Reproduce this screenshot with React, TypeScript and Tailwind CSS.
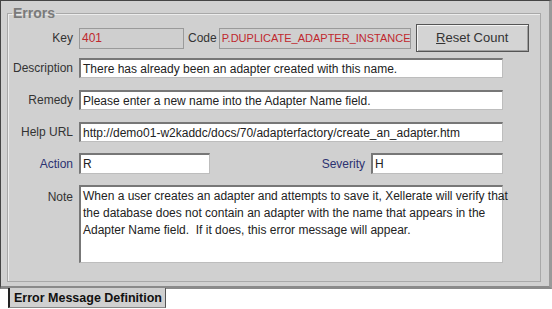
import { ReactElement, ReactNode } from "react";

const FONT = "font-['Liberation_Sans',Arial,sans-serif]";

const Label = ({ children, blue = false, w = "w-[71px]" }: { children: ReactNode; blue?: boolean; w?: string }): ReactElement => (
  <div className={`${w} shrink-0 text-right pr-[6px] text-[12px] ${blue ? "text-[#2c3270]" : "text-[#333]"}`}>
    {children}
  </div>
);

const Field = ({ value, w = "w-[424px]", h = "h-[20px]", disabled = false, small = false }: { value: string; w?: string; h?: string; disabled?: boolean; small?: boolean }): ReactElement => (
  <div
    className={`${w} ${h} shrink-0 flex items-center px-[2px] ${small ? "text-[11px]" : "text-[12px]"} whitespace-nowrap overflow-hidden ${
      disabled
        ? "bg-[#cfcfcf] border border-[#9a9a9a] text-[#c0282e]"
        : "bg-white border-t-2 border-l-2 border-t-[#777] border-l-[#777] border-b border-r border-b-[#bdbdbd] border-r-[#bdbdbd] text-[#222]"
    }`}
  >
    {value}
  </div>
);

const NOTE = [
  "When a user creates an adapter and attempts to save it, Xellerate will verify that",
  "the database does not contain an adapter with the name that appears in the",
  "Adapter Name field.  If it does, this error message will appear.",
];

const App = (): ReactElement => {
  return (
    <div className={`w-[552px] h-[309px] bg-white overflow-hidden ${FONT}`}>
      <div className="h-[289px] bg-[#d0d0d0] border-t border-l border-t-[#444] border-l-[#444] border-r-[3px] border-b-[3px] border-r-[#9a9a9a] border-b-[#8a8a8a] pl-[6px] pr-[8px] pt-[5px] pb-[4px]">
        <fieldset className="h-full border border-[#a8a8a8] shadow-[inset_1px_1px_0_#ececec] px-0 pb-0">
          <legend className="ml-[4px] px-[1px] text-[14px] font-bold text-[#7a7a7a] leading-[14px]">Errors</legend>
          <div className="flex items-center mt-[4px] h-[28px]">
            <Label>Key</Label>
            <Field value="401" w="w-[105px]" h="h-[21px]" disabled />
            <div className="pl-[4px] pr-[2px] text-[12px] text-[#333]">Code</div>
            <Field value="P.DUPLICATE_ADAPTER_INSTANCE" w="w-[192px]" h="h-[21px]" disabled small />
            <button className="ml-[5px] w-[113px] h-[28px] border border-[#555] shadow-[inset_1px_1px_0_#f4f4f4,inset_-1px_-1px_0_#a0a0a0] bg-[#d4d4d4] text-[13px] text-[#333]">
              <span className="underline">R</span>eset Count
            </button>
          </div>
          <div className="flex items-center mt-[6px]">
            <Label>Description</Label>
            <Field value="There has already been an adapter created with this name." />
          </div>
          <div className="flex items-center mt-[12px]">
            <Label>Remedy</Label>
            <Field value="Please enter a new name into the Adapter Name field." />
          </div>
          <div className="flex items-center mt-[12px]">
            <Label>Help URL</Label>
            <Field value="http://demo01-w2kaddc/docs/70/adapterfactory/create_an_adapter.htm" />
          </div>
          <div className="flex items-center mt-[11px]">
            <Label blue>Action</Label>
            <Field value="R" w="w-[131px]" h="h-[21px]" />
            <Label blue w="w-[161px]">Severity</Label>
            <Field value="H" w="w-[132px]" h="h-[21px]" />
          </div>
          <div className="flex items-start mt-[11px]">
            <Label>
              <span className="block pt-[3px]">Note</span>
            </Label>
            <div className="w-[424px] h-[78px] bg-white border-t-2 border-l-2 border-t-[#777] border-l-[#777] border-b border-r border-b-[#bdbdbd] border-r-[#bdbdbd] px-[2px] pt-[1px] text-[12px] leading-[17px] text-[#222]">
              {NOTE.map((line) => (
                <div key={line} className="whitespace-pre">
                  {line}
                </div>
              ))}
            </div>
          </div>
        </fieldset>
      </div>
      <div className="ml-[8px] -mt-[1px] w-[158px] h-[20px] bg-[#d0d0d0] border-l-2 border-l-[#222] border-r border-r-[#555] border-b border-b-[#888] text-[12.5px] font-bold text-[#111] pl-[4px] leading-[20px] whitespace-nowrap">
        Error Message Definition
      </div>
    </div>
  );
};

export default App;
